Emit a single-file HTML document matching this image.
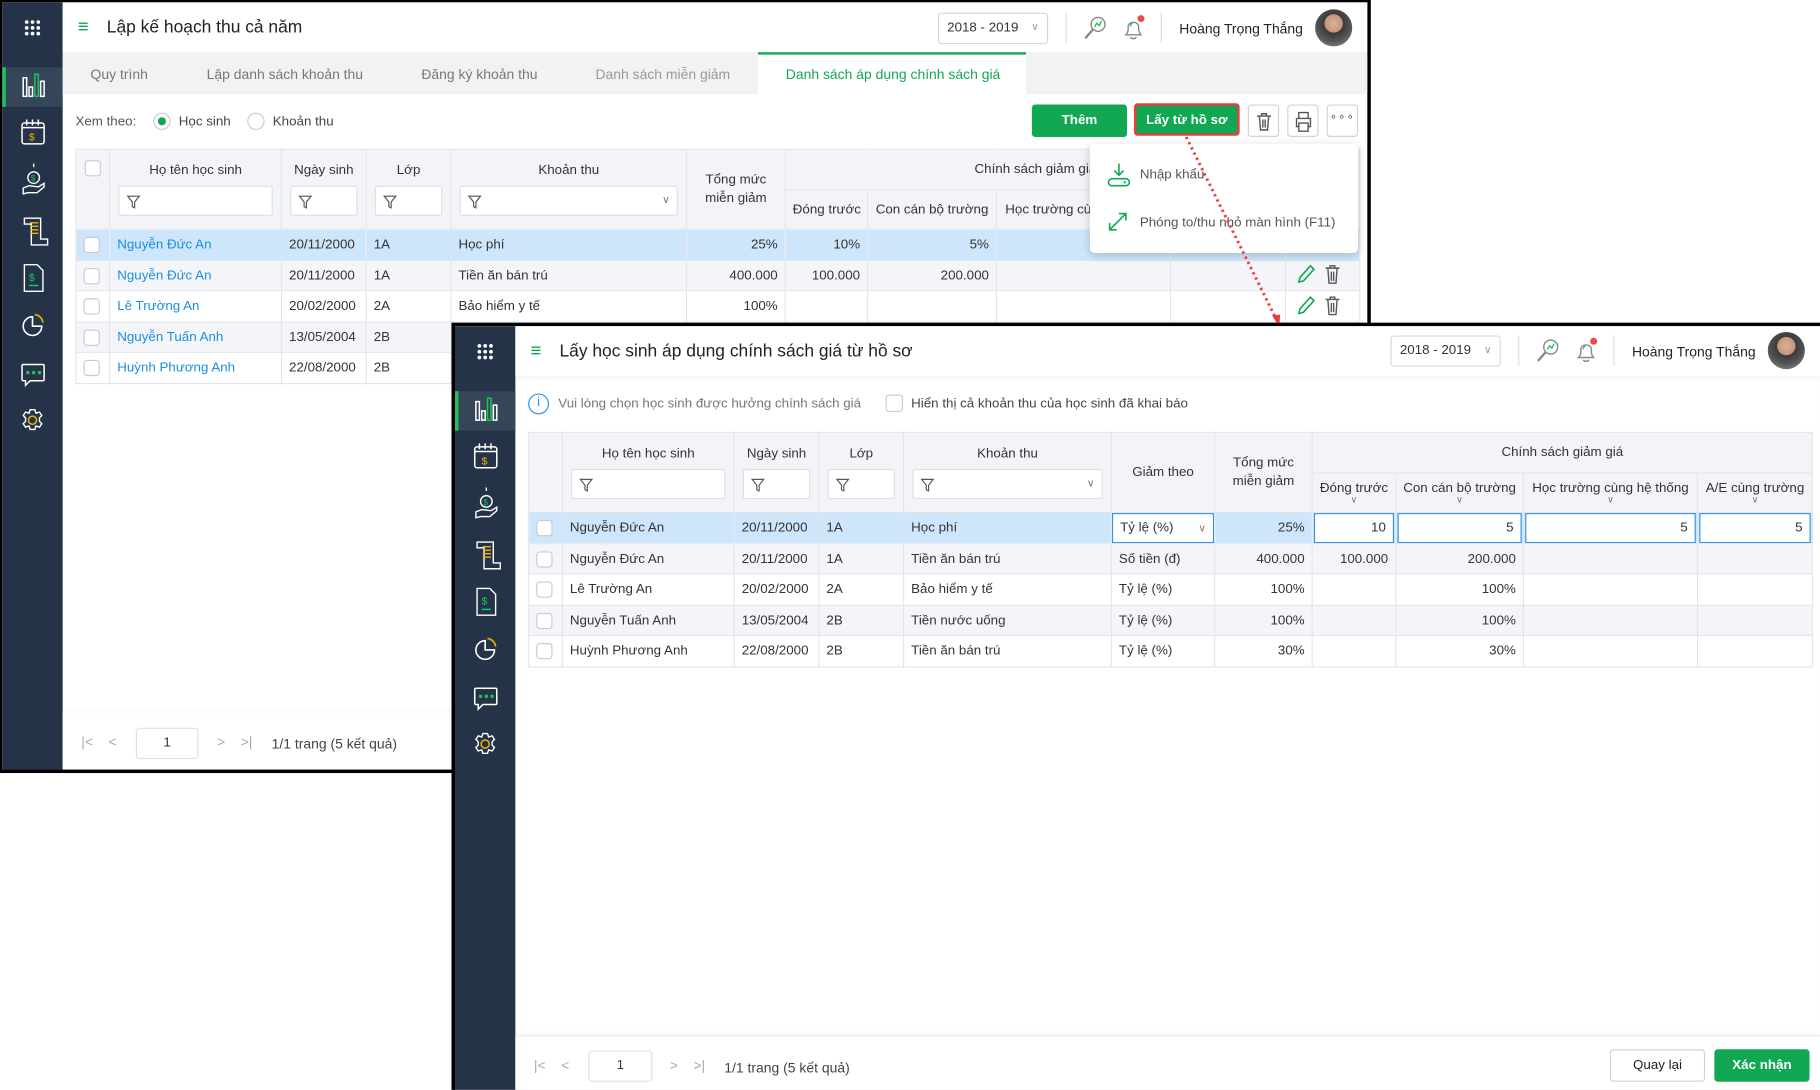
<!DOCTYPE html>
<html><head><meta charset="utf-8">
<style>
*{box-sizing:border-box;margin:0;padding:0}
html,body{width:1820px;height:1090px;overflow:hidden;background:#fff}
body{font-family:"Liberation Sans","DejaVu Sans",sans-serif;color:#333;font-size:11.5px}
#root{position:absolute;left:0;top:0;width:1568px;height:939px;transform:scale(1.16071);transform-origin:0 0}
.a{position:absolute}
.win{position:absolute;background:#fff;overflow:hidden}
.side{position:absolute;left:0;top:0;width:52px;height:100%;background:#243348}
.hdr{position:absolute;left:52px;right:0;top:0;height:43px;background:#fff;box-shadow:0 2px 4px rgba(0,0,0,.06)}
.title{position:absolute;top:12px;font-size:15px;color:#222}
.sel{position:absolute;height:27px;border:1px solid #d5d8dd;border-radius:3px;font-size:11.5px;padding:6px 7px;color:#333;background:#fff}
.vsep{position:absolute;width:1px;height:26px;background:#ddd}
table{border-collapse:collapse;table-layout:fixed;position:absolute}
td,th{border:1px solid #e2e5ec;font-weight:normal;font-size:11.5px;white-space:nowrap;overflow:hidden;padding:0 6px}
th{background:#f3f4f8;color:#333}
.flt{display:block;height:26px;border:1px solid #dde0e6;background:#fff;border-radius:2px;margin-top:7px;position:relative}
.flt svg{position:absolute;left:6px;top:7px}
.cb{display:inline-block;width:14px;height:14px;border:1px solid #c8cbd2;border-radius:3px;background:#fff;vertical-align:middle}
.r{text-align:right}
.lnk{color:#1a8fe0}
tr.sel1 td{background:#cde6fb}
tr.alt td{background:#f4f5f9}
.btn{position:absolute;height:28px;border-radius:3px;font-size:11.5px;text-align:center;line-height:28px}
.g{background:#12a853;color:#fff;font-weight:bold}
.ib{position:absolute;width:27px;height:28px;border:1px solid #cfd3d9;border-radius:3px;background:#fff}
.inp{display:block;height:26px;border:1px solid #2e93e6;background:#fff;text-align:right;padding:6px 6px;line-height:13px}
.chev{display:block;font-size:8px;color:#777;line-height:6px;margin-top:1px}
.tab{position:absolute;top:55px;font-size:12px}
</style></head><body><div id="root">

<!-- WINDOW 1 -->
<div class="a" style="left:0;top:0;width:1181px;height:666px;background:#000"></div>
<div class="win" style="left:2px;top:2px;width:1176px;height:661px">
  <div class="side">
    <svg width="52" height="661" viewBox="0 0 52 661">
      <g fill="#fff"><circle cx="21" cy="17" r="1.6"/><circle cx="26" cy="17" r="1.6"/><circle cx="31" cy="17" r="1.6"/><circle cx="21" cy="22" r="1.6"/><circle cx="26" cy="22" r="1.6"/><circle cx="31" cy="22" r="1.6"/><circle cx="21" cy="27" r="1.6"/><circle cx="26" cy="27" r="1.6"/><circle cx="31" cy="27" r="1.6"/></g>
      <rect x="0" y="56" width="52" height="34" fill="#364659"/><rect x="0" y="56" width="3" height="34" fill="#1ec45a"/>
      <g fill="none" stroke="#fff" stroke-width="1.3"><rect x="18" y="65" width="3" height="16"/><rect x="23" y="73" width="3" height="8"/><rect x="33" y="68" width="3" height="13"/></g><rect x="28" y="62" width="3" height="19" fill="none" stroke="#1ec45a" stroke-width="1.3"/>
      <g fill="none" stroke="#fff" stroke-width="1.3"><rect x="17" y="104" width="19" height="18" rx="2"/><path d="M17 108h19M21 101v5M26 101v5M31 101v5"/></g><text x="23" y="119" fill="#f0b400" font-size="9" font-family="Liberation Sans">$</text>
      <g fill="none" stroke="#fff" stroke-width="1.2"><circle cx="27" cy="151" r="5"/><path d="M18 160l5-2 8 1 5-3v3l-6 5h-8l-4 1zM27 142v-3"/></g><text x="24.5" y="154" fill="#1ec45a" font-size="7">$</text>
      <g fill="none" stroke="#fff" stroke-width="1.2"><path d="M19 186h14v18h6v5h-14v-18h-6z"/></g><path d="M24 190h7M24 193h7M24 196h7M24 199h7" stroke="#f0b400" stroke-width="1.2"/>
      <g fill="none" stroke="#fff" stroke-width="1.2"><path d="M19 226h11l5 5v18h-16z"/></g><text x="23" y="240" fill="#1ec45a" font-size="9">$</text><path d="M23 244h8" stroke="#1ec45a" stroke-width="1.3"/>
      <g fill="none" stroke-width="1.4"><path d="M26 271a8 8 0 1 0 8 8h-8z" stroke="#fff"/><path d="M28 269a8 8 0 0 1 7 7" stroke="#f0b400"/></g>
      <g fill="none" stroke="#fff" stroke-width="1.3"><path d="M18 312h17a1 1 0 0 1 1 1v12a1 1 0 0 1-1 1h-11l-4 4v-4h-2a1 1 0 0 1-1-1v-12a1 1 0 0 1 1-1z"/></g><g fill="#1ec45a"><circle cx="22" cy="319" r="1.5"/><circle cx="27" cy="319" r="1.5"/><circle cx="32" cy="319" r="1.5"/></g>
      <g fill="none" stroke="#fff" stroke-width="1.2"><path d="M24 351h4l1 3 3-1 2 3-2 2v3l2 2-2 3-3-1-1 3h-4l-1-3-3 1-2-3 2-2v-3l-2-2 2-3 3 1z"/></g><circle cx="26" cy="360" r="3.5" fill="none" stroke="#f0b400" stroke-width="1.3"/>
    </svg>
  </div>
  <div class="hdr">
    <div class="a" style="left:13px;top:14px;font-size:16px;color:#12a853;line-height:16px">&#8801;</div>
    <div class="title" style="left:38px;top:13px">Lập kế hoạch thu cả năm</div>
    <div class="sel" style="left:754px;top:9px;width:95px">2018 - 2019 <span style="float:right;color:#999;font-size:9px">&#8744;</span></div>
    <div class="vsep" style="left:864px;top:9px"></div>
    <svg class="a" style="left:877px;top:10px" width="24" height="24"><circle cx="15" cy="9" r="6" fill="none" stroke="#888" stroke-width="1.2"/><path d="M11 13l-7 8" stroke="#888" stroke-width="2"/><path d="M12 11l2-3 2 2 2-4" stroke="#1ec45a" fill="none" stroke-width="1.2"/></svg>
    <svg class="a" style="left:910px;top:9px" width="24" height="26"><path d="M6 19c2-2 2-4 2-8a5 5 0 0 1 9 0c0 4 0 6 2 8z M10 21a3 3 0 0 0 5 0" fill="none" stroke="#888" stroke-width="1.2"/><path d="M10 12a3 3 0 0 1 2-3" stroke="#1ec45a" fill="none"/><circle cx="19" cy="5" r="3" fill="#f04848"/></svg>
    <div class="vsep" style="left:946px;top:9px"></div>
    <div class="a" style="left:962px;top:16px;font-size:12px;color:#222">Hoàng Trọng Thắng</div>
    <div class="a" style="left:1079px;top:6px;width:32px;height:32px;border-radius:50%;background:radial-gradient(circle at 50% 38%,#d9b49a 0,#c49479 30%,#3a3a3a 32%,#555 60%,#9a9a9a 100%)"></div>
  </div>
  <!-- tabs -->
  <div class="a" style="left:52px;top:43px;right:0;height:36px;background:#f1f2f4"></div>
  <div class="tab" style="left:76px;color:#777">Quy trình</div>
  <div class="tab" style="left:176px;color:#777">Lập danh sách khoản thu</div>
  <div class="tab" style="left:361px;color:#777">Đăng ký khoản thu</div>
  <div class="tab" style="left:511px;color:#999">Danh sách miễn giảm</div>
  <div class="a" style="left:651px;top:43px;width:231px;height:36px;background:#fff;border-top:2px solid #12a853"></div>
  <div class="tab" style="left:675px;color:#12a853">Danh sách áp dụng chính sách giá</div>
  <!-- xem theo -->
  <div class="a" style="left:63px;top:97px;color:#555">Xem theo:</div>
  <div class="a" style="left:130px;top:95px;width:15px;height:15px;border:1px solid #ccc;border-radius:50%"><div style="width:7px;height:7px;border-radius:50%;background:#12a853;margin:3px"></div></div>
  <div class="a" style="left:152px;top:97px;color:#444">Học sinh</div>
  <div class="a" style="left:211px;top:95px;width:15px;height:15px;border:1px solid #ccc;border-radius:50%"></div>
  <div class="a" style="left:233px;top:97px;color:#444">Khoản thu</div>
  <div class="btn g" style="left:887px;top:88px;width:82px">Thêm</div>
  <div class="btn g" style="left:975px;top:87px;width:91px;border:2px solid #ee3b3b;line-height:26px">Lấy từ hồ sơ</div>
  <div class="ib" style="left:1073px;top:88px"><svg width="27" height="28"><path d="M7 9h12M11 9V7h4v2M9 9l1 12h6l1-12M12 12v7M14 12v7" fill="none" stroke="#555" stroke-width="1.2"/></svg></div>
  <div class="ib" style="left:1107px;top:88px"><svg width="27" height="28"><path d="M9 11V6h8v5M7 11h12v7h-2M9 18H7v-7M9 15h8v7H9z" fill="none" stroke="#555" stroke-width="1.2"/></svg></div>
  <div class="ib" style="left:1141px;top:88px;text-align:center;line-height:22px;color:#555;font-size:10px;letter-spacing:1px">&#8728;&#8728;&#8728;</div>
  <!-- table 1 -->
  <table style="left:63px;top:126px;width:1106px">
    <colgroup><col style="width:29px"><col style="width:148px"><col style="width:73px"><col style="width:73px"><col style="width:203px"><col style="width:85px"><col style="width:71px"><col style="width:111px"><col style="width:150px"><col style="width:99px"><col style="width:64px"></colgroup>
    <tr style="height:35px"><th rowspan="2" style="vertical-align:top;padding-top:9px"><span class="cb"></span></th>
      <th rowspan="2" style="padding:6px 7px 6px">Họ tên học sinh<span class="flt"><svg width="12" height="12"><path d="M1 1h10l-4 5v5l-2-1V6z" fill="none" stroke="#555"/></svg></span></th>
      <th rowspan="2" style="padding:6px 7px 6px">Ngày sinh<span class="flt"><svg width="12" height="12"><path d="M1 1h10l-4 5v5l-2-1V6z" fill="none" stroke="#555"/></svg></span></th>
      <th rowspan="2" style="padding:6px 7px 6px">Lớp<span class="flt"><svg width="12" height="12"><path d="M1 1h10l-4 5v5l-2-1V6z" fill="none" stroke="#555"/></svg></span></th>
      <th rowspan="2" style="padding:6px 7px 6px">Khoản thu<span class="flt"><svg width="12" height="12"><path d="M1 1h10l-4 5v5l-2-1V6z" fill="none" stroke="#555"/></svg><span style="position:absolute;right:6px;top:6px;font-size:9px;color:#777">&#8744;</span></span></th>
      <th rowspan="2" style="white-space:normal;line-height:16px">Tổng mức miễn giảm</th>
      <th colspan="4">Chính sách giảm giá</th><th rowspan="2"></th></tr>
    <tr style="height:34px"><th>Đóng trước</th><th>Con cán bộ trường</th><th>Học trường cùng hệ thống</th><th></th></tr>
    <tr class="sel1" style="height:27px"><td><span class="cb"></span></td><td class="lnk">Nguyễn Đức An</td><td>20/11/2000</td><td>1A</td><td>Học phí</td><td class="r">25%</td><td class="r">10%</td><td class="r">5%</td><td></td><td></td><td></td></tr>
    <tr class="alt" style="height:26px"><td><span class="cb"></span></td><td class="lnk">Nguyễn Đức An</td><td>20/11/2000</td><td>1A</td><td>Tiền ăn bán trú</td><td class="r">400.000</td><td class="r">100.000</td><td class="r">200.000</td><td></td><td></td><td style="padding:0 8px"><svg width="44" height="18"><path d="M3 16l1-4 9-10 3 3-9 10z" fill="none" stroke="#12a853" stroke-width="1.4"/><path d="M26 4h12M30 4V2h4v2M28 4l1 13h6l1-13M31 7v8M33 7v8" fill="none" stroke="#555" stroke-width="1.2"/></svg></td></tr>
    <tr style="height:27px"><td><span class="cb"></span></td><td class="lnk">Lê Trường An</td><td>20/02/2000</td><td>2A</td><td>Bảo hiểm y tế</td><td class="r">100%</td><td></td><td></td><td></td><td></td><td style="padding:0 8px"><svg width="44" height="18"><path d="M3 16l1-4 9-10 3 3-9 10z" fill="none" stroke="#12a853" stroke-width="1.4"/><path d="M26 4h12M30 4V2h4v2M28 4l1 13h6l1-13M31 7v8M33 7v8" fill="none" stroke="#555" stroke-width="1.2"/></svg></td></tr>
    <tr class="alt" style="height:26px"><td><span class="cb"></span></td><td class="lnk">Nguyễn Tuấn Anh</td><td>13/05/2004</td><td>2B</td><td></td><td></td><td></td><td></td><td></td><td></td><td></td></tr>
    <tr style="height:27px"><td><span class="cb"></span></td><td class="lnk">Huỳnh Phương Anh</td><td>22/08/2000</td><td>2B</td><td></td><td></td><td></td><td></td><td></td><td></td><td></td></tr>
  </table>
  <!-- dropdown -->
  <div class="a" style="left:937px;top:122px;width:231px;height:94px;background:#fff;border-radius:4px;box-shadow:0 2px 8px rgba(0,0,0,.18)">
    <svg class="a" style="left:14px;top:16px" width="22" height="22"><path d="M11 1v10M7 7l4 4 4-4" fill="none" stroke="#12a853" stroke-width="1.4"/><rect x="2" y="14" width="18" height="6" rx="3" fill="none" stroke="#12a853" stroke-width="1.4"/><circle cx="16" cy="17" r="1" fill="#12a853"/></svg>
    <div class="a" style="left:43px;top:21px;color:#555">Nhập khẩu</div>
    <svg class="a" style="left:14px;top:57px" width="20" height="20"><path d="M3 17L17 3M11 3h6v6M3 11v6h6" fill="none" stroke="#12a853" stroke-width="1.4"/></svg>
    <div class="a" style="left:43px;top:62px;color:#555">Phóng to/thu nhỏ màn hình (F11)</div>
  </div>
  <!-- pagination -->
  <div class="a" style="left:52px;top:612px;right:0;height:49px;background:#fff;box-shadow:0 -2px 4px rgba(0,0,0,.04)"></div>
  <div class="a" style="left:68px;top:630px;color:#aaa;font-size:12px">|&lt;&nbsp;&nbsp;&nbsp;&nbsp;&lt;</div>
  <div class="a" style="left:115px;top:625px;width:54px;height:27px;border:1px solid #dcdfe4;border-radius:3px;text-align:center;line-height:25px">1</div>
  <div class="a" style="left:185px;top:630px;color:#aaa;font-size:12px">&gt;&nbsp;&nbsp;&nbsp;&nbsp;&gt;|</div>
  <div class="a" style="left:232px;top:632px;color:#444;font-size:12px">1/1 trang (5 kết quả)</div>
</div>

<!-- red dotted arrow -->
<svg class="a" style="left:0;top:0" width="1568" height="939"><path d="M1022 118L1100 276" stroke="#ee3b3b" stroke-width="2.5" stroke-dasharray="2 3" fill="none"/><path d="M1096 272l6 9 1-10z" fill="#ee3b3b"/></svg>

<!-- WINDOW 2 -->
<div class="a" style="left:389px;top:278px;width:1179px;height:661px;background:#000"></div>
<div class="win" style="left:392px;top:281px;width:1176px;height:658px">
  <div class="side">
    <svg width="52" height="661" viewBox="0 0 52 661">
      <g fill="#fff"><circle cx="21" cy="17" r="1.6"/><circle cx="26" cy="17" r="1.6"/><circle cx="31" cy="17" r="1.6"/><circle cx="21" cy="22" r="1.6"/><circle cx="26" cy="22" r="1.6"/><circle cx="31" cy="22" r="1.6"/><circle cx="21" cy="27" r="1.6"/><circle cx="26" cy="27" r="1.6"/><circle cx="31" cy="27" r="1.6"/></g>
      <rect x="0" y="56" width="52" height="34" fill="#364659"/><rect x="0" y="56" width="3" height="34" fill="#1ec45a"/>
      <g fill="none" stroke="#fff" stroke-width="1.3"><rect x="18" y="65" width="3" height="16"/><rect x="23" y="73" width="3" height="8"/><rect x="33" y="68" width="3" height="13"/></g><rect x="28" y="62" width="3" height="19" fill="none" stroke="#1ec45a" stroke-width="1.3"/>
      <g fill="none" stroke="#fff" stroke-width="1.3"><rect x="17" y="104" width="19" height="18" rx="2"/><path d="M17 108h19M21 101v5M26 101v5M31 101v5"/></g><text x="23" y="119" fill="#f0b400" font-size="9" font-family="Liberation Sans">$</text>
      <g fill="none" stroke="#fff" stroke-width="1.2"><circle cx="27" cy="151" r="5"/><path d="M18 160l5-2 8 1 5-3v3l-6 5h-8l-4 1zM27 142v-3"/></g><text x="24.5" y="154" fill="#1ec45a" font-size="7">$</text>
      <g fill="none" stroke="#fff" stroke-width="1.2"><path d="M19 186h14v18h6v5h-14v-18h-6z"/></g><path d="M24 190h7M24 193h7M24 196h7M24 199h7" stroke="#f0b400" stroke-width="1.2"/>
      <g fill="none" stroke="#fff" stroke-width="1.2"><path d="M19 226h11l5 5v18h-16z"/></g><text x="23" y="240" fill="#1ec45a" font-size="9">$</text><path d="M23 244h8" stroke="#1ec45a" stroke-width="1.3"/>
      <g fill="none" stroke-width="1.4"><path d="M26 271a8 8 0 1 0 8 8h-8z" stroke="#fff"/><path d="M28 269a8 8 0 0 1 7 7" stroke="#f0b400"/></g>
      <g fill="none" stroke="#fff" stroke-width="1.3"><path d="M18 312h17a1 1 0 0 1 1 1v12a1 1 0 0 1-1 1h-11l-4 4v-4h-2a1 1 0 0 1-1-1v-12a1 1 0 0 1 1-1z"/></g><g fill="#1ec45a"><circle cx="22" cy="319" r="1.5"/><circle cx="27" cy="319" r="1.5"/><circle cx="32" cy="319" r="1.5"/></g>
      <g fill="none" stroke="#fff" stroke-width="1.2"><path d="M24 351h4l1 3 3-1 2 3-2 2v3l2 2-2 3-3-1-1 3h-4l-1-3-3 1-2-3 2-2v-3l-2-2 2-3 3 1z"/></g><circle cx="26" cy="360" r="3.5" fill="none" stroke="#f0b400" stroke-width="1.3"/>
    </svg>
  </div>
  <div class="hdr">
    <div class="a" style="left:13px;top:14px;font-size:16px;color:#12a853;line-height:16px">&#8801;</div>
    <div class="title" style="left:38px;top:13px">Lấy học sinh áp dụng chính sách giá từ hồ sơ</div>
    <div class="sel" style="left:754px;top:8px;width:95px">2018 - 2019 <span style="float:right;color:#999;font-size:9px">&#8744;</span></div>
    <div class="vsep" style="left:864px;top:8px"></div>
    <svg class="a" style="left:877px;top:9px" width="24" height="24"><circle cx="15" cy="9" r="6" fill="none" stroke="#888" stroke-width="1.2"/><path d="M11 13l-7 8" stroke="#888" stroke-width="2"/><path d="M12 11l2-3 2 2 2-4" stroke="#1ec45a" fill="none" stroke-width="1.2"/></svg>
    <svg class="a" style="left:910px;top:8px" width="24" height="26"><path d="M6 19c2-2 2-4 2-8a5 5 0 0 1 9 0c0 4 0 6 2 8z M10 21a3 3 0 0 0 5 0" fill="none" stroke="#888" stroke-width="1.2"/><path d="M10 12a3 3 0 0 1 2-3" stroke="#1ec45a" fill="none"/><circle cx="19" cy="5" r="3" fill="#f04848"/></svg>
    <div class="vsep" style="left:946px;top:8px"></div>
    <div class="a" style="left:962px;top:15px;font-size:12px;color:#222">Hoàng Trọng Thắng</div>
    <div class="a" style="left:1079px;top:5px;width:32px;height:32px;border-radius:50%;background:radial-gradient(circle at 50% 38%,#d9b49a 0,#c49479 30%,#3a3a3a 32%,#555 60%,#9a9a9a 100%)"></div>
  </div>
  <!-- info -->
  <div class="a" style="left:63px;top:58px;width:18px;height:18px;border:1.5px solid #2e93e6;border-radius:50%;color:#2e93e6;text-align:center;font-size:11px;line-height:15px">i</div>
  <div class="a" style="left:89px;top:61px;color:#777">Vui lòng chọn học sinh được hưởng chính sách giá</div>
  <div class="a" style="left:371px;top:59px;width:15px;height:15px;border:1px solid #c8cbd2;border-radius:3px"></div>
  <div class="a" style="left:393px;top:61px;color:#444">Hiển thị cả khoản thu của học sinh đã khai báo</div>
  <!-- table 2 -->
  <table style="left:63px;top:91px;width:1106px">
    <colgroup><col style="width:29px"><col style="width:148px"><col style="width:73px"><col style="width:73px"><col style="width:179px"><col style="width:89px"><col style="width:84px"><col style="width:72px"><col style="width:110px"><col style="width:150px"><col style="width:99px"></colgroup>
    <tr style="height:35px"><th rowspan="2"></th>
      <th rowspan="2" style="padding:6px 7px 6px">Họ tên học sinh<span class="flt"><svg width="12" height="12"><path d="M1 1h10l-4 5v5l-2-1V6z" fill="none" stroke="#555"/></svg></span></th>
      <th rowspan="2" style="padding:6px 7px 6px">Ngày sinh<span class="flt"><svg width="12" height="12"><path d="M1 1h10l-4 5v5l-2-1V6z" fill="none" stroke="#555"/></svg></span></th>
      <th rowspan="2" style="padding:6px 7px 6px">Lớp<span class="flt"><svg width="12" height="12"><path d="M1 1h10l-4 5v5l-2-1V6z" fill="none" stroke="#555"/></svg></span></th>
      <th rowspan="2" style="padding:6px 7px 6px">Khoản thu<span class="flt"><svg width="12" height="12"><path d="M1 1h10l-4 5v5l-2-1V6z" fill="none" stroke="#555"/></svg><span style="position:absolute;right:6px;top:6px;font-size:9px;color:#777">&#8744;</span></span></th>
      <th rowspan="2">Giảm theo</th>
      <th rowspan="2" style="white-space:normal;line-height:16px">Tổng mức miễn giảm</th>
      <th colspan="4">Chính sách giảm giá</th></tr>
    <tr style="height:34px"><th style="padding:0 2px">Đóng trước<span class="chev">&#8744;</span></th><th style="padding:0 2px">Con cán bộ trường<span class="chev">&#8744;</span></th><th style="padding:0 2px">Học trường cùng hệ thống<span class="chev">&#8744;</span></th><th style="padding:0 2px">A/E cùng trường<span class="chev">&#8744;</span></th></tr>
    <tr class="sel1" style="height:27px"><td><span class="cb"></span></td><td>Nguyễn Đức An</td><td>20/11/2000</td><td>1A</td><td>Học phí</td><td style="padding:0"><span class="inp" style="text-align:left">Tỷ lệ (%)<span style="float:right;font-size:9px;color:#777">&#8744;</span></span></td><td class="r">25%</td><td style="padding:0 1px"><span class="inp">10</span></td><td style="padding:0 1px"><span class="inp">5</span></td><td style="padding:0 1px"><span class="inp">5</span></td><td style="padding:0 1px"><span class="inp">5</span></td></tr>
    <tr class="alt" style="height:26px"><td><span class="cb"></span></td><td>Nguyễn Đức An</td><td>20/11/2000</td><td>1A</td><td>Tiền ăn bán trú</td><td>Số tiền (đ)</td><td class="r">400.000</td><td class="r">100.000</td><td class="r">200.000</td><td></td><td></td></tr>
    <tr style="height:27px"><td><span class="cb"></span></td><td>Lê Trường An</td><td>20/02/2000</td><td>2A</td><td>Bảo hiểm y tế</td><td>Tỷ lệ (%)</td><td class="r">100%</td><td></td><td class="r">100%</td><td></td><td></td></tr>
    <tr class="alt" style="height:26px"><td><span class="cb"></span></td><td>Nguyễn Tuấn Anh</td><td>13/05/2004</td><td>2B</td><td>Tiền nước uống</td><td>Tỷ lệ (%)</td><td class="r">100%</td><td></td><td class="r">100%</td><td></td><td></td></tr>
    <tr style="height:27px"><td><span class="cb"></span></td><td>Huỳnh Phương Anh</td><td>22/08/2000</td><td>2B</td><td>Tiền ăn bán trú</td><td>Tỷ lệ (%)</td><td class="r">30%</td><td></td><td class="r">30%</td><td></td><td></td></tr>
  </table>
  <!-- footer -->
  <div class="a" style="left:52px;top:611px;right:0;height:47px;background:#fff;border-top:1px solid #eee;box-shadow:0 -2px 4px rgba(0,0,0,.04)"></div>
  <div class="a" style="left:68px;top:630px;color:#aaa;font-size:12px">|&lt;&nbsp;&nbsp;&nbsp;&nbsp;&lt;</div>
  <div class="a" style="left:115px;top:624px;width:55px;height:27px;border:1px solid #dcdfe4;border-radius:3px;text-align:center;line-height:25px">1</div>
  <div class="a" style="left:185px;top:630px;color:#aaa;font-size:12px">&gt;&nbsp;&nbsp;&nbsp;&nbsp;&gt;|</div>
  <div class="a" style="left:232px;top:632px;color:#444;font-size:12px">1/1 trang (5 kết quả)</div>
  <div class="btn" style="left:995px;top:623px;width:82px;border:1px solid #cfd3d9;background:#fff;color:#222;line-height:26px">Quay lại</div>
  <div class="btn g" style="left:1085px;top:623px;width:82px">Xác nhận</div>
</div>
</div></body></html>
